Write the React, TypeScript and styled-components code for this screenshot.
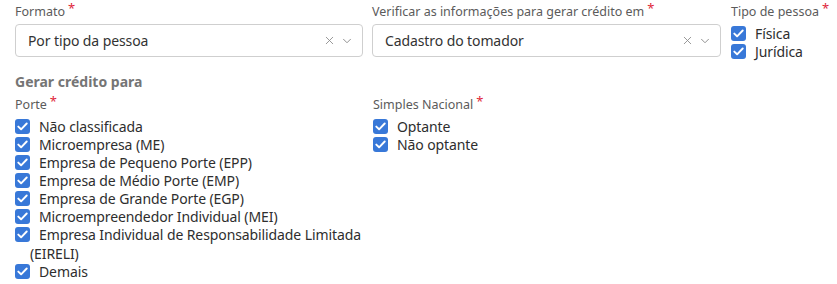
import styled, { createGlobalStyle } from "styled-components";
import { X, ChevronDown } from "lucide-react";

const GlobalStyle = createGlobalStyle`
  html, body {
    margin: 0;
    padding: 0;
    background: #fff;
  }
  body {
    font-family: "Noto Sans", "Open Sans", Arial, sans-serif;
    color: #333;
  }
`;

const Page = styled.div`
  padding: 3px 15px 0 15px;
  width: 837px;
  box-sizing: border-box;
`;

const TopRow = styled.div`
  display: grid;
  grid-template-columns: 348px 349px 1fr;
  column-gap: 9px;

  & > :last-child {
    margin-left: 1px;
  }
`;

const Field = styled.div`
  display: flex;
  flex-direction: column;
`;

const Label = styled.div`
  font-size: 12.5px;
  line-height: 17px;
  color: #5b5b5b;
  margin-bottom: 4px;
  white-space: nowrap;
`;

const Required = styled.span`
  color: #e0263a;
  font-size: 13px;
  position: relative;
  top: -3px;
  margin-left: 3px;
`;

const SelectBox = styled.div`
  height: 33px;
  box-sizing: border-box;
  border: 1px solid #cfcfcf;
  border-radius: 4px;
  display: flex;
  align-items: center;
  padding: 0 8px 0 12px;
  font-size: 14px;
  letter-spacing: -0.1px;
  color: #333;
`;

const SelectValue = styled.span`
  flex: 1;
`;

const SelectIcons = styled.span`
  display: flex;
  align-items: center;
  gap: 4px;
  color: #8a8a8a;
`;

const CheckList = styled.div`
  display: flex;
  flex-direction: column;
`;

const CheckItem = styled.label`
  display: block;
  padding-left: 15px;
  font-size: 14px;
  letter-spacing: -0.1px;
  line-height: 19px;
  margin-bottom: -1px;
  color: #2e2e2e;
`;

const Box = styled.span`
  float: left;
  width: 15px;
  height: 15px;
  margin: 2px 9px 0 -15px;
  border-radius: 3px;
  background: #3878d8;
  display: flex;
  align-items: center;
  justify-content: center;
`;

const SectionTitle = styled.div`
  font-size: 14px;
  font-weight: 700;
  color: #757575;
  line-height: 18px;
  margin-top: 13px;
  margin-bottom: 5px;
`;

const BottomRow = styled.div`
  display: grid;
  grid-template-columns: 348px 1fr;
  column-gap: 10px;
`;

function Check({ children }: { children: React.ReactNode }) {
  return (
    <CheckItem>
      <Box>
        <svg width="11" height="9" viewBox="0 0 11 9">
          <path
            d="M1.3 4.6 L4.1 7.3 L9.7 1.5"
            fill="none"
            stroke="#fff"
            strokeWidth="1.9"
            strokeLinecap="round"
            strokeLinejoin="round"
          />
        </svg>
      </Box>
      {children}
    </CheckItem>
  );
}

function Select({ value }: { value: string }) {
  return (
    <SelectBox>
      <SelectValue>{value}</SelectValue>
      <SelectIcons>
        <X size={13} strokeWidth={1.6} />
        <ChevronDown size={14} strokeWidth={1.6} />
      </SelectIcons>
    </SelectBox>
  );
}

const portes = [
  "Não classificada",
  "Microempresa (ME)",
  "Empresa de Pequeno Porte (EPP)",
  "Empresa de Médio Porte (EMP)",
  "Empresa de Grande Porte (EGP)",
  "Microempreendedor Individual (MEI)",
  "Empresa Individual de Responsabilidade Limitada (EIRELI)",
  "Demais",
];

export default function App() {
  return (
    <Page>
      <GlobalStyle />
      <TopRow>
        <Field>
          <Label>
            Formato<Required>*</Required>
          </Label>
          <Select value="Por tipo da pessoa" />
        </Field>
        <Field>
          <Label>
            Verificar as informações para gerar crédito em<Required>*</Required>
          </Label>
          <Select value="Cadastro do tomador" />
        </Field>
        <Field>
          <Label>
            Tipo de pessoa<Required>*</Required>
          </Label>
          <CheckList>
            <Check>Física</Check>
            <Check>Jurídica</Check>
          </CheckList>
        </Field>
      </TopRow>

      <SectionTitle>Gerar crédito para</SectionTitle>

      <BottomRow>
        <Field>
          <Label>
            Porte<Required>*</Required>
          </Label>
          <CheckList>
            {portes.map((p) => (
              <Check key={p}>{p}</Check>
            ))}
          </CheckList>
        </Field>
        <Field>
          <Label>
            Simples Nacional<Required>*</Required>
          </Label>
          <CheckList>
            <Check>Optante</Check>
            <Check>Não optante</Check>
          </CheckList>
        </Field>
      </BottomRow>
    </Page>
  );
}
